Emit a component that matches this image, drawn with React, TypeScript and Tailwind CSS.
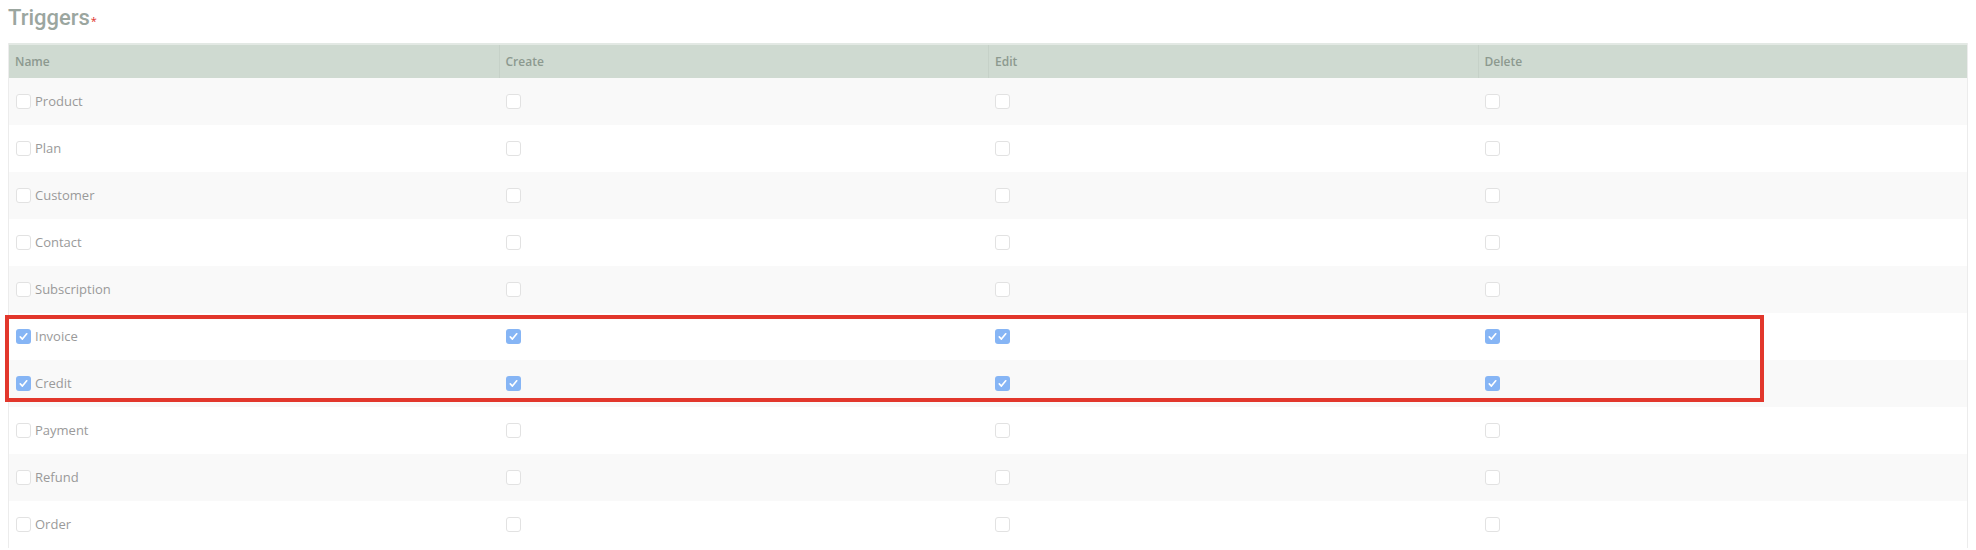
const triggers = [
	{ name: "Product", on: false },
	{ name: "Plan", on: false },
	{ name: "Customer", on: false },
	{ name: "Contact", on: false },
	{ name: "Subscription", on: false },
	{ name: "Invoice", on: true },
	{ name: "Credit", on: true },
	{ name: "Payment", on: false },
	{ name: "Refund", on: false },
	{ name: "Order", on: false },
];

const Box = ({ checked }: { checked: boolean }) =>
	checked ? (
		<span className="flex h-[15px] w-[15px] shrink-0 items-center justify-center rounded-[3px] bg-[#86b5f5]">
			<svg viewBox="0 0 12 12" className="h-[11px] w-[11px]" fill="none" stroke="white" strokeWidth={1.8} strokeLinecap="round" strokeLinejoin="round">
				<path d="M2.5 6.5l2.3 2.3L9.5 3" />
			</svg>
		</span>
	) : (
		<span className="block h-[15px] w-[15px] shrink-0 rounded-[3px] border border-[#e2e2e2] bg-white" />
	);

export default function App() {
	return (
		<div className="relative h-[550px] w-[1976px] overflow-hidden bg-white px-2 pt-[3px] font-['Open_Sans',sans-serif]">
			<div className="flex h-[40px] items-start">
				<span className="font-['Roboto',sans-serif] text-[22px] font-medium leading-[30px] text-[#9ba69f]">
					Triggers
				</span>
				<span className="mt-[12px] ml-[1px] text-[11px] leading-none text-[#e0302a]">*</span>
			</div>

			<div className="border-x border-[#ececec]">
				<div className="grid h-[35px] grid-cols-4 border-t-2 border-[#e3e9e4] bg-[#cfdad1]">
					{["Name", "Create", "Edit", "Delete"].map((h, i) => (
						<div
							key={h}
							className={`flex items-center px-[6px] text-[12px] font-semibold text-[#8c998f] ${i > 0 ? "border-l border-[#c6d1c8]" : ""}`}
						>
							{h}
						</div>
					))}
				</div>

				{triggers.map((t, i) => (
					<div
						key={t.name}
						className={`grid h-[47px] grid-cols-4 items-center ${i % 2 === 0 ? "bg-[#f9f9f9]" : "bg-white"}`}
					>
						<div className="flex items-center gap-[4px] px-[7px]">
							<Box checked={t.on} />
							<span className="text-[13px] text-[#9a9a9a]">{t.name}</span>
						</div>
						<div className="px-[7px]">
							<Box checked={t.on} />
						</div>
						<div className="px-[7px]">
							<Box checked={t.on} />
						</div>
						<div className="px-[7px]">
							<Box checked={t.on} />
						</div>
					</div>
				))}
			</div>

			{/* highlight annotation */}
			<div className="pointer-events-none absolute left-[5px] top-[315px] h-[87px] w-[1759px] border-4 border-[#e2372c]" />
		</div>
	);
}
